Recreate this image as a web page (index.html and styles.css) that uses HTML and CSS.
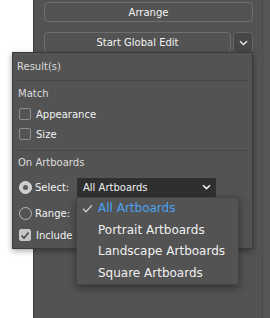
FILE: index.html
```html
<!DOCTYPE html>
<html>
<head>
<meta charset="utf-8">
<link rel="stylesheet" href="styles.css">
</head>
<body>
<div class="workspace">
  <div class="gutter"></div>
  <div class="panel">
    <div class="panel-main">
      <div class="btn">Arrange</div>
      <div class="btn-row">
        <div class="btn btn-wide">Start Global Edit</div>
        <div class="btn btn-icon">
          <svg width="9" height="6" viewBox="0 0 9 6"><path d="M1 1.2 L4.5 4.6 L8 1.2" fill="none" stroke="#e6e6e6" stroke-width="1.4"/></svg>
        </div>
      </div>
    </div>
    <div class="rail"></div>
  </div>
</div>

<div class="popup">
  <div class="popup-head">Result(s)</div>
  <div class="sep"></div>
  <div class="group-title">Match</div>
  <div class="check-row"><span class="checkbox"></span><span class="label">Appearance</span></div>
  <div class="check-row"><span class="checkbox"></span><span class="label">Size</span></div>
  <div class="sep sep-gap"></div>
  <div class="group-title group-title-b">On Artboards</div>
  <div class="radio-row">
    <span class="radio radio-on"><span class="dot"></span></span>
    <span class="label label-fixed">Select:</span>
    <div class="dropdown">
      <span>All Artboards</span>
      <svg class="dd-chev" width="9" height="6" viewBox="0 0 9 6"><path d="M1 1.2 L4.5 4.6 L8 1.2" fill="none" stroke="#f0f0f0" stroke-width="1.5"/></svg>
      <div class="menu">
        <div class="menu-item selected">
          <span class="check-slot"><svg width="11" height="9" viewBox="0 0 11 9"><path d="M1 4.8 L4 7.8 L10 1.2" fill="none" stroke="#c9c9c9" stroke-width="1.4"/></svg></span>
          <span>All Artboards</span>
        </div>
        <div class="menu-item"><span class="check-slot"></span><span>Portrait Artboards</span></div>
        <div class="menu-item"><span class="check-slot"></span><span>Landscape Artboards</span></div>
        <div class="menu-item"><span class="check-slot"></span><span>Square Artboards</span></div>
      </div>
    </div>
  </div>
  <div class="radio-row radio-row-b">
    <span class="radio"></span>
    <span class="label label-fixed">Range:</span>
  </div>
  <div class="check-row">
    <span class="checkbox checked"><svg width="10" height="9" viewBox="0 0 10 9"><path d="M1.5 4.6 L4 7 L8.6 1.6" fill="none" stroke="#4a4a4a" stroke-width="1.6"/></svg></span>
    <span class="label">Include</span>
  </div>
</div>
</body>
</html>
```

FILE: styles.css
```css
* { box-sizing: border-box; }
html, body { margin: 0; padding: 0; }
body {
  width: 270px;
  height: 318px;
  background: #ffffff;
  font-family: "DejaVu Sans", "Liberation Sans", sans-serif;
  font-size: 10px;
  color: #f0f0f0;
  overflow: hidden;
  position: relative;
}
.workspace { display: flex; height: 318px; }
.gutter { width: 33px; background: #ffffff; }
.panel {
  flex: 1;
  display: flex;
  background: #535353;
  border-left: 1px solid #3e3e3e;
}
.panel-main {
  width: 219px;
  padding: 2px 0 0 10px;
  display: flex;
  flex-direction: column;
  gap: 10px;
}
.rail {
  flex: 1;
  background: linear-gradient(to right, #535353 0, #535353 9px, #4a4a4a 9px, #4a4a4a 10px, #565656 10px);
}
.btn {
  height: 20px;
  border: 1px solid #6e6e6e;
  border-radius: 4px;
  display: flex;
  align-items: center;
  justify-content: center;
  background: #535353;
  color: #f2f2f2;
}
.btn-row { display: flex; gap: 2px; height: 21px; }
.btn-row .btn { height: 21px; }
.btn-wide { width: 187px; }
.btn-icon { width: 20px; background: #474747; border-color: #666; }

.popup {
  position: absolute;
  left: 12px;
  top: 52px;
  width: 241px;
  height: 197px;
  background: #535353;
  border: 1px solid #3a3a3a;
  box-shadow: 0 2px 6px rgba(0, 0, 0, 0.35);
}
.popup-head {
  height: 27px;
  line-height: 27px;
  padding-left: 4px;
  color: #dcdcdc;
}
.sep { height: 1px; background: #464646; margin: 0 4px; }
.sep-gap { margin-top: 6px; }
.group-title {
  padding: 6px 0 3px 5px;
  line-height: 14px;
  color: #dcdcdc;
}
.group-title-b { padding: 5px 0 5px 5px; }
.check-row {
  height: 20px;
  display: flex;
  align-items: center;
  padding-left: 6px;
  gap: 5px;
}
.label { color: #f2f2f2; white-space: nowrap; }
.checkbox {
  width: 12px;
  height: 12px;
  border: 1px solid #8e8e8e;
  border-radius: 2px;
  flex: none;
  display: flex;
  align-items: center;
  justify-content: center;
}
.checkbox.checked { background: #c6c6c6; border-color: #c6c6c6; }
.radio-row {
  height: 24px;
  display: flex;
  align-items: center;
  padding-left: 6px;
  gap: 3px;
}
.radio-row-b { margin-top: 2px; }
.radio {
  width: 13px;
  height: 13px;
  border-radius: 50%;
  border: 1px solid #b8b8b8;
  flex: none;
  display: flex;
  align-items: center;
  justify-content: center;
}
.radio-on { background: #cdcdcd; border-color: #dedede; }
.dot { width: 5px; height: 5px; border-radius: 50%; background: #5a5a5a; }
.label-fixed { width: 39px; }
.dropdown {
  position: relative;
  width: 139px;
  height: 19px;
  background: #2f2f2f;
  border-radius: 2px;
  display: flex;
  align-items: center;
  justify-content: space-between;
  padding: 0 5px 0 6px;
  color: #f0f0f0;
}
.menu {
  position: absolute;
  left: -1px;
  top: 19px;
  width: 163px;
  background: #535353;
  border: 1px solid #434343;
  box-shadow: 0 3px 8px rgba(0, 0, 0, 0.4);
  font-size: 12px;
  z-index: 5;
}
.menu-item {
  height: 21.5px;
  display: flex;
  align-items: center;
  padding-left: 5px;
  color: #f0f0f0;
  white-space: nowrap;
}
.menu-item.selected { color: #4aa3f2; }
.check-slot { width: 16px; display: flex; align-items: center; }
```
